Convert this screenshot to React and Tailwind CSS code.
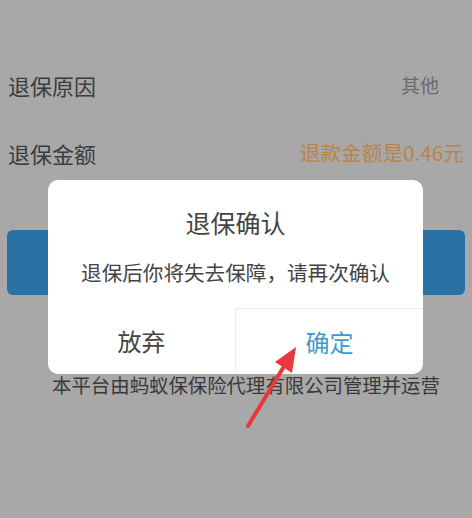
import React from "react";

function InfoRow({ label, value, valueClass }) {
  return (
    <div className="flex h-[68px] items-center justify-between pl-2">
      <span className="text-[22px] leading-[30px] text-[#3c3c3c]">{label}</span>
      <span className={valueClass}>{value}</span>
    </div>
  );
}

function ConfirmDialog() {
  return (
    <div className="absolute left-[48px] top-[180px] flex h-[194px] w-[375px] flex-col rounded-[10px] bg-white">
      <div className="pt-[26px] text-center text-[25px] leading-[32px] text-[#444]">
        退保确认
      </div>
      <div className="mt-[20px] text-center text-[20.6px] leading-[28px] text-[#444]">
        退保后你将失去保障，请再次确认
      </div>
      <div className="mt-auto flex h-[66px]">
        <button className="flex-1 text-[24px] text-[#444]">放弃</button>
        <button className="flex-1 rounded-br-[10px] border-l border-t border-[#eeeeee] text-[24px] text-[#3d9ad1]">
          确定
        </button>
      </div>
    </div>
  );
}

export default function App() {
  return (
    <div
      className="relative h-[518px] w-[472px] overflow-hidden bg-[#a8a8a8]"
      style={{ fontFamily: '"Noto Sans CJK SC", "Noto Sans", sans-serif' }}
    >
      <div className="pt-[51px]">
        <InfoRow
          label="退保原因"
          value="其他"
          valueClass="pr-[33px] text-[19px] text-[#6b6b6b]"
        />
        <InfoRow
          label="退保金额"
          value="退款金额是0.46元"
          valueClass="pr-2 text-[20.7px] text-[#b8844c]"
        />
        <div className="mx-[7px] mt-[43px] h-[65px] rounded-md bg-[#2a72a6]" />
        <p className="mt-[76px] pl-5 text-center text-[19.4px] leading-[28px] text-[#3a3a3a]">
          本平台由蚂蚁保保险代理有限公司管理并运营
        </p>
      </div>

      <ConfirmDialog />

      {/* red annotation arrow */}
      <svg className="absolute inset-0" width="472" height="518" viewBox="0 0 472 518">
        <line x1="248" y1="426" x2="286" y2="363" stroke="#e8383d" strokeWidth="4" strokeLinecap="round" />
        <polygon points="296,347 292,373 275,362" fill="#e8383d" />
      </svg>
    </div>
  );
}
